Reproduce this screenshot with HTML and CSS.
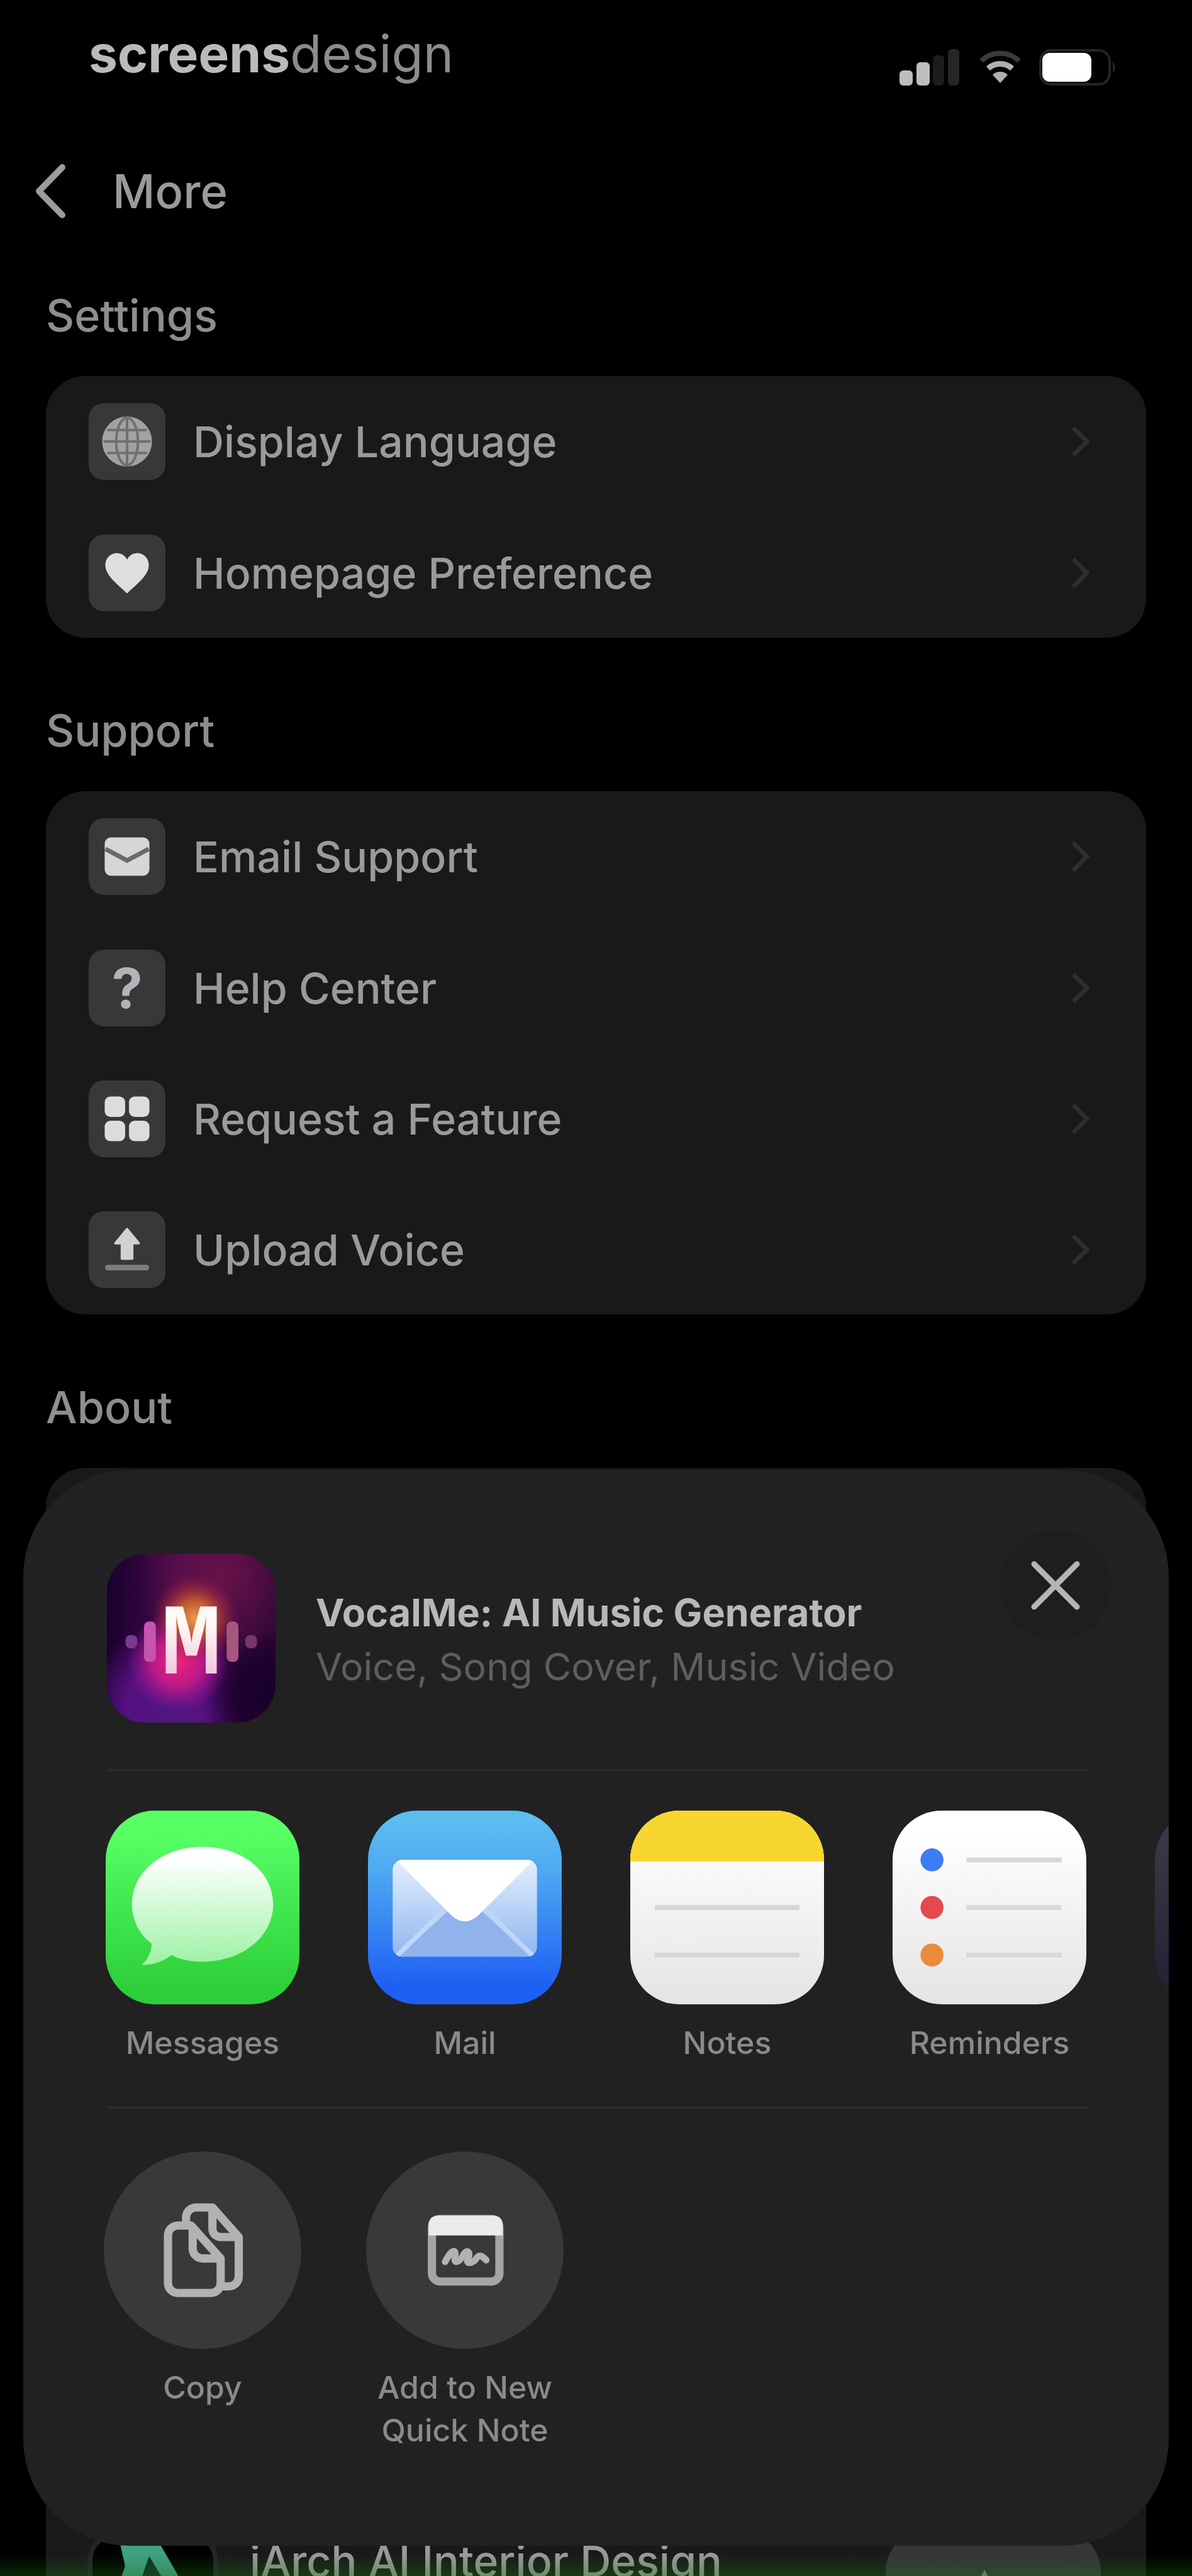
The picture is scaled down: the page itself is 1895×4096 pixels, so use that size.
FILE: index.html
```html
<!DOCTYPE html>
<html lang="en">
<head>
    <meta charset="UTF-8">
    <meta name="viewport" content="width=device-width, initial-scale=1.0">
    <title>More</title>
    <link rel="stylesheet" href="styles.css">
</head>
<body>
    <div class="screen">
        <div class="status-bar">
            <div class="brand"><strong>screens</strong>design</div>
            <div class="status-icons">
                <svg width="98" height="58" viewBox="0 0 98 58">
                    <rect x="0" y="34" width="21" height="24" rx="6" fill="#bdbdbd"/>
                    <rect x="27" y="21" width="21" height="37" rx="6" fill="#bdbdbd"/>
                    <rect x="53" y="10" width="18" height="48" rx="6" fill="#1c1c1c"/>
                    <rect x="77" y="0" width="18" height="58" rx="6" fill="#262626"/>
                </svg>
                <svg width="68" height="54" viewBox="0 0 68 54">
                    <path d="M4 17a43 43 0 0 1 60 0" fill="none" stroke="#3a3a3a" stroke-width="8"/>
                    <path d="M15 29a28 28 0 0 1 38 0" fill="none" stroke="#b0b0b0" stroke-width="9"/>
                    <path d="M34 52L22 39a17 17 0 0 1 24 0z" fill="#b0b0b0"/>
                </svg>
                <svg width="126" height="58" viewBox="0 0 126 58">
                    <rect x="2" y="2" width="110" height="54" rx="17" fill="none" stroke="#242424" stroke-width="4"/>
                    <path d="M117 20q8 9 0 18z" fill="#242424"/>
                    <rect x="5" y="6" width="78" height="46" rx="12" fill="#fff"/>
                </svg>
            </div>
        </div>

        <header class="top-nav">
            <a class="back" href="#" aria-label="Back">
                <svg width="54" height="90" viewBox="0 0 54 90">
                    <path d="M46 7L9 45l37 38" fill="none" stroke="#9c9c9c" stroke-width="10" stroke-linecap="round" stroke-linejoin="round"/>
                </svg>
            </a>
            <h1>More</h1>
        </header>

        <h2>Settings</h2>
        <nav class="card">
            <a class="row" href="#">
                <span class="icon">
                    <svg viewBox="0 0 120 120">
                        <circle cx="60" cy="60" r="39" fill="#a2a2a2"/>
                        <g fill="none" stroke="#707070" stroke-width="4">
                            <ellipse cx="60" cy="60" rx="17" ry="37"/>
                            <path d="M23 60h74M29 42h62M29 78h62M60 22v76"/>
                        </g>
                    </svg>
                </span>
                <span class="label">Display Language</span>
                <svg class="arrow" viewBox="0 0 30 52"><path d="M4 4l22 22L4 48"/></svg>
            </a>
            <a class="row" href="#">
                <span class="icon">
                    <svg viewBox="0 0 120 120">
                        <path d="M60 92C48 80 26 65 26 48c0-11 8-19 18-19 7 0 13 4 16 10 3-6 9-10 16-10 10 0 18 8 18 19 0 17-22 32-34 44z" fill="#dedede"/>
                    </svg>
                </span>
                <span class="label">Homepage Preference</span>
                <svg class="arrow" viewBox="0 0 30 52"><path d="M4 4l22 22L4 48"/></svg>
            </a>
        </nav>

        <h2>Support</h2>
        <nav class="card">
            <a class="row" href="#">
                <span class="icon">
                    <svg viewBox="0 0 120 120">
                        <rect x="25" y="30" width="70" height="60" rx="10" fill="#d6d6d6"/>
                        <path d="M26 48l34 18 34-18" fill="none" stroke="#6a6a6a" stroke-width="7"/>
                    </svg>
                </span>
                <span class="label">Email Support</span>
                <svg class="arrow" viewBox="0 0 30 52"><path d="M4 4l22 22L4 48"/></svg>
            </a>
            <a class="row" href="#">
                <span class="icon question">?</span>
                <span class="label">Help Center</span>
                <svg class="arrow" viewBox="0 0 30 52"><path d="M4 4l22 22L4 48"/></svg>
            </a>
            <a class="row" href="#">
                <span class="icon">
                    <svg viewBox="0 0 120 120" fill="#dcdcdc">
                        <rect x="25" y="25" width="32" height="32" rx="9"/>
                        <rect x="63" y="25" width="32" height="32" rx="9"/>
                        <rect x="25" y="63" width="32" height="32" rx="9"/>
                        <rect x="63" y="63" width="32" height="32" rx="9"/>
                    </svg>
                </span>
                <span class="label">Request a Feature</span>
                <svg class="arrow" viewBox="0 0 30 52"><path d="M4 4l22 22L4 48"/></svg>
            </a>
            <a class="row" href="#">
                <span class="icon">
                    <svg viewBox="0 0 120 120">
                        <path d="M60 28l18 22H68v24H52V50H42z" fill="#d0d0d0" stroke="#d0d0d0" stroke-width="4" stroke-linejoin="round"/>
                        <path d="M30 88h60" stroke="#7c7c7c" stroke-width="9" stroke-linecap="round"/>
                    </svg>
                </span>
                <span class="label">Upload Voice</span>
                <svg class="arrow" viewBox="0 0 30 52"><path d="M4 4l22 22L4 48"/></svg>
            </a>
        </nav>

        <h2>About</h2>
        <div class="card about">
            <div class="promo">
                <svg class="promo-icon" viewBox="0 0 200 200">
                    <path d="M46 14H112L190 150H162L94 34 40 190H8L54 50z" fill="#40a184"/>
                    <path d="M94 34L40 190h120l-12-66z" fill="#0d3327"/>
                </svg>
                <span class="label">iArch AI Interior Design</span>
                <button class="get" type="button" aria-label="Get">
                    <svg width="80" height="80" viewBox="0 0 80 80">
                        <path d="M26 4l20 40H6z" fill="#8a8a8a"/>
                    </svg>
                </button>
            </div>
        </div>
        <div class="glow"></div>
    </div>

    <!-- share sheet -->
    <section class="sheet" aria-label="Share">
        <div class="sheet-head">
            <svg class="app-icon" viewBox="0 0 100 100">
                <defs>
                    <linearGradient id="base" x1="0" y1="0" x2="1" y2="0">
                        <stop offset="0" stop-color="#19002c"/>
                        <stop offset=".45" stop-color="#4a0c50"/>
                        <stop offset="1" stop-color="#2c0634"/>
                    </linearGradient>
                    <radialGradient id="wine" cx=".68" cy=".12" r=".5">
                        <stop offset="0" stop-color="#68124a"/>
                        <stop offset="1" stop-color="#68124a" stop-opacity="0"/>
                    </radialGradient>
                    <radialGradient id="violet" cx=".36" cy=".92" r=".5">
                        <stop offset="0" stop-color="#4c1780"/>
                        <stop offset=".5" stop-color="#5a1288" stop-opacity=".9"/>
                        <stop offset="1" stop-color="#5a1288" stop-opacity="0"/>
                    </radialGradient>
                    <radialGradient id="night" cx=".95" cy=".85" r=".4">
                        <stop offset="0" stop-color="#19002c"/>
                        <stop offset=".5" stop-color="#19002c" stop-opacity=".85"/>
                        <stop offset="1" stop-color="#19002c" stop-opacity="0"/>
                    </radialGradient>
                    <radialGradient id="pink" cx=".42" cy=".64" r=".3">
                        <stop offset="0" stop-color="#ee2478"/>
                        <stop offset=".5" stop-color="#c41a88" stop-opacity=".9"/>
                        <stop offset="1" stop-color="#9a1498" stop-opacity="0"/>
                    </radialGradient>
                    <radialGradient id="orange" cx=".52" cy=".38" r=".26">
                        <stop offset="0" stop-color="#ec9a4c"/>
                        <stop offset=".4" stop-color="#c8602e" stop-opacity=".9"/>
                        <stop offset="1" stop-color="#a01440" stop-opacity="0"/>
                    </radialGradient>
                    <linearGradient id="letter" x1="0" y1="0" x2="0" y2="1">
                        <stop offset=".3" stop-color="#fffaf4"/>
                        <stop offset=".9" stop-color="#eeb4d4"/>
                    </linearGradient>
                </defs>
                <rect width="100" height="100" fill="url(#base)"/>
                <rect width="100" height="100" fill="url(#wine)"/>
                <rect width="100" height="100" fill="url(#violet)"/>
                <rect width="100" height="100" fill="url(#night)"/>
                <rect width="100" height="100" fill="url(#pink)"/>
                <rect width="100" height="100" fill="url(#orange)"/>
                <rect x="11" y="48" width="7" height="8" rx="3" fill="#7a3890"/>
                <rect x="22" y="40" width="7" height="24" rx="3" fill="#c455b0"/>
                <rect x="71" y="40" width="7" height="24" rx="3" fill="#a5577e"/>
                <rect x="82" y="48" width="7" height="8" rx="3" fill="#763668"/>
                <text class="app-letter" x="50" y="71" text-anchor="middle" fill="url(#letter)">M</text>
            </svg>
            <div class="app-text">
                <div class="app-name">VocalMe: AI Music Generator</div>
                <div class="app-desc">Voice, Song Cover, Music Video</div>
            </div>
            <button class="close" type="button" aria-label="Close">
                <svg width="80" height="80" viewBox="0 0 80 80">
                    <path d="M6 6l68 68M74 6L6 74" stroke="#b4b4b4" stroke-width="9" stroke-linecap="round"/>
                </svg>
            </button>
        </div>

        <div class="share-row apps">
            <a class="share-item" href="#">
                <svg class="tile" viewBox="0 0 118 118">
                    <defs>
                        <linearGradient id="green" x1="0" y1="0" x2="0" y2="1">
                            <stop offset=".1" stop-color="#58ff65"/>
                            <stop offset=".9" stop-color="#2dd03a"/>
                        </linearGradient>
                        <linearGradient id="bubble" x1="0" y1="0" x2="0" y2="1">
                            <stop offset=".1" stop-color="#fff"/>
                            <stop offset="1" stop-color="#9df2a4"/>
                        </linearGradient>
                    </defs>
                    <rect width="118" height="118" fill="url(#green)"/>
                    <path d="M59 22c24 0 43 15 43 35S83 92 59 92c-7 0-13-1-19-4-5 4-11 6-18 6 4-4 6-8 6-13-8-6-12-15-12-24 0-20 19-35 43-35z" fill="url(#bubble)"/>
                </svg>
                <span>Messages</span>
            </a>
            <a class="share-item" href="#">
                <svg class="tile" viewBox="0 0 118 118">
                    <defs>
                        <linearGradient id="blue" x1="0" y1="0" x2="0" y2="1">
                            <stop offset=".05" stop-color="#5bbdf0"/>
                            <stop offset=".3" stop-color="#4faaf0"/>
                            <stop offset=".9" stop-color="#1f60f4"/>
                        </linearGradient>
                        <linearGradient id="paper" x1="0" y1="0" x2="0" y2="1">
                            <stop offset="0" stop-color="#e4effd"/>
                            <stop offset="1" stop-color="#8fb6f0"/>
                        </linearGradient>
                        <clipPath id="mailclip"><rect x="15" y="30" width="88" height="59" rx="6"/></clipPath>
                    </defs>
                    <rect width="118" height="118" fill="url(#blue)"/>
                    <g clip-path="url(#mailclip)">
                        <rect x="15" y="30" width="88" height="59" fill="url(#paper)"/>
                        <path d="M15 92l44-40 44 40z" fill="#91b3ec"/>
                        <path d="M17 89l32-31M101 89L69 58" stroke="#bcd7f8" stroke-width="3"/>
                        <path d="M15 28h88L67 64q-8 7-16 0z" fill="#fff"/>
                    </g>
                </svg>
                <span>Mail</span>
            </a>
            <a class="share-item" href="#">
                <svg class="tile" viewBox="0 0 118 118">
                    <defs>
                        <linearGradient id="sheetwhite" x1="0" y1="0" x2="0" y2="1">
                            <stop offset=".1" stop-color="#fff"/>
                            <stop offset="1" stop-color="#e4e4e4"/>
                        </linearGradient>
                    </defs>
                    <rect width="118" height="118" fill="url(#sheetwhite)"/>
                    <rect width="118" height="31" fill="#f7d72f"/>
                    <path d="M15 59h88M15 88h88" stroke="#d6d6d6" stroke-width="3"/>
                </svg>
                <span>Notes</span>
            </a>
            <a class="share-item" href="#">
                <svg class="tile" viewBox="0 0 118 118">
                    <rect width="118" height="118" fill="url(#sheetwhite)"/>
                    <circle cx="24" cy="30" r="7" fill="#3d7bf2"/>
                    <circle cx="24" cy="59" r="7" fill="#e5484f"/>
                    <circle cx="24" cy="88" r="7" fill="#ea8b3c"/>
                    <path d="M45 30h58M45 59h58M45 88h58" stroke="#d9d9d9" stroke-width="3"/>
                </svg>
                <span>Reminders</span>
            </a>
            <a class="share-item" href="#" aria-label="More apps">
                <svg class="tile" viewBox="0 0 118 118">
                    <defs>
                        <linearGradient id="dusk" x1="0" y1="0" x2="0" y2="1">
                            <stop offset="0" stop-color="#3e3b4c"/>
                            <stop offset="1" stop-color="#221f33"/>
                        </linearGradient>
                    </defs>
                    <rect width="118" height="118" fill="url(#dusk)"/>
                </svg>
            </a>
        </div>

        <div class="share-row actions">
            <button class="share-item" type="button">
                <span class="circle">
                    <svg viewBox="0 0 120 120" fill="none" stroke="#b2b2b2" stroke-width="5" stroke-linejoin="round" stroke-linecap="round">
                        <path d="M50 44V40a6 6 0 0 1 6-6h10l16 18v24a6 6 0 0 1-6 6h-4"/>
                        <path d="M66 35v12a5 5 0 0 0 5 5h10"/>
                        <path d="M45 45h8l18 20v15a6 6 0 0 1-6 6H45a6 6 0 0 1-6-6V51a6 6 0 0 1 6-6z"/>
                        <path d="M54 46v13a6 6 0 0 0 6 6h10"/>
                    </svg>
                </span>
                <span>Copy</span>
            </button>
            <button class="share-item" type="button">
                <span class="circle">
                    <svg viewBox="0 0 120 120">
                        <rect x="40" y="41" width="41" height="38" rx="5" fill="none" stroke="#a4a4a4" stroke-width="5"/>
                        <path d="M38 51v-6q0-6 6-6h33q6 0 6 6v6z" fill="#ebebeb"/>
                        <path d="M48 67c4-8 7-8 6-3s3 3 5-1 5-2 3 2 3 3 5 0 4-1 6 1" fill="none" stroke="#b2b2b2" stroke-width="4" stroke-linecap="round"/>
                    </svg>
                </span>
                <span>Add to New<br>Quick Note</span>
            </button>
        </div>
    </section>
</body>
</html>
```

FILE: styles.css
```css
* {
    box-sizing: border-box;
}
body {
    margin: 0;
    background-color: #000;
    color: #9a9a9a;
    font-family: Inter, "Liberation Sans", sans-serif;
    font-weight: 500;
}
a {
    color: inherit;
    text-decoration: none;
}
button {
    border: none;
    padding: 0;
    background: none;
    color: inherit;
    font: inherit;
}
svg {
    display: block;
}
.screen {
    position: relative;
    display: flex;
    flex-direction: column;
    height: 100vh;
    overflow: hidden;
    padding: 0 73px;
}

/* status bar */
.status-bar {
    display: flex;
    justify-content: space-between;
    align-items: flex-end;
    padding: 36px 44px 0 68px;
}
.brand {
    font-size: 82px;
    line-height: 100px;
    font-weight: 400;
    color: #8c8c8c;
}
.brand strong {
    font-weight: 700;
    color: #bababa;
}
.status-icons {
    display: flex;
    align-items: center;
    gap: 28px;
}

/* title */
.top-nav {
    display: flex;
    align-items: center;
    height: 100px;
    margin: 118px 0 0 -20px;
    gap: 72px;
}
h1 {
    margin: 0;
    font-size: 74px;
    font-weight: 500;
}
h2 {
    margin: 108px 0 56px;
    font-size: 70px;
    line-height: 80px;
    font-weight: 500;
    color: #8e8e8e;
}

/* settings cards */
.card {
    background-color: #191919;
    border-radius: 62px;
}
.row {
    display: flex;
    align-items: center;
    height: 208px;
    margin: 0 68px;
    gap: 44px;
}
.row + .row {
    border-top: 2px solid #1d1d1d;
}
.label {
    flex: 1;
    font-size: 68px;
}
.icon {
    display: flex;
    justify-content: center;
    align-items: center;
    width: 122px;
    height: 122px;
    border-radius: 24px;
    background-color: #38383a;
}
.icon svg {
    width: 100%;
    height: 100%;
}
.question {
    font-size: 88px;
    font-weight: 700;
    color: #b4b4b8;
}
.arrow {
    width: 30px;
    height: 52px;
    margin-right: 22px;
    fill: none;
    stroke: #2e2e30;
    stroke-width: 7px;
}
.about {
    flex: 1;
    display: flex;
    align-items: flex-end;
    border-radius: 62px 62px 0 0;
}
.promo {
    flex: 1;
    display: flex;
    align-items: flex-start;
    height: 72px;
    padding: 0 72px 0 66px;
    gap: 50px;
}
.promo-icon {
    width: 208px;
    height: 208px;
    border: 8px solid #242426;
    border-radius: 48px;
    background-color: #000;
}
.promo .label {
    line-height: 96px;
}
.get {
    display: flex;
    justify-content: center;
    width: 342px;
    height: 150px;
    padding-top: 58px;
    border-radius: 64px;
    background-color: #363638;
}
.glow {
    position: absolute;
    left: 0;
    right: 0;
    bottom: 0;
    height: 36px;
    background: linear-gradient(transparent, rgba(30, 110, 20, 0.35));
}

/* share sheet */
.sheet {
    position: fixed;
    left: 37px;
    right: 37px;
    bottom: 48px;
    padding: 96px 0 150px;
    border-radius: 170px;
    background-color: #212121;
    overflow: hidden;
}
.sheet-head {
    display: flex;
    align-items: flex-start;
    padding: 0 92px 0 133px;
    gap: 64px;
}
.app-icon {
    width: 268px;
    height: 268px;
    margin-top: 38px;
    border-radius: 60px;
}
.app-letter {
    font-family: "Liberation Mono", monospace;
    font-size: 60px;
    font-weight: 700;
}
.app-text {
    flex: 1;
    margin-top: 88px;
    font-size: 61px;
    line-height: 86px;
}
.app-name {
    font-weight: 700;
    color: #b8b8b8;
}
.app-desc {
    font-weight: 400;
    color: #5e5e5e;
}
.close {
    display: flex;
    justify-content: center;
    align-items: center;
    width: 176px;
    height: 176px;
    border-radius: 50%;
    background-color: #1e1e1e;
}
.share-row {
    display: flex;
    position: relative;
}
.share-row::before {
    content: "";
    position: absolute;
    top: 0;
    left: 133px;
    right: 127px;
    height: 4px;
    background-color: #2b2b2b;
}
.apps {
    margin-top: 74px;
    padding: 66px 0 67px 131px;
    gap: 109px;
}
.actions {
    padding: 72px 0 0 128px;
    gap: 103px;
}
.share-item {
    flex: none;
    display: flex;
    flex-direction: column;
    align-items: center;
    justify-content: flex-start;
    gap: 27px;
    font-size: 50px;
    line-height: 68px;
    text-align: center;
    color: #8a8a8a;
}
.tile {
    width: 308px;
    height: 308px;
    border-radius: 78px;
}
.circle {
    width: 314px;
    height: 314px;
    border-radius: 50%;
    background-color: #393939;
}
```
